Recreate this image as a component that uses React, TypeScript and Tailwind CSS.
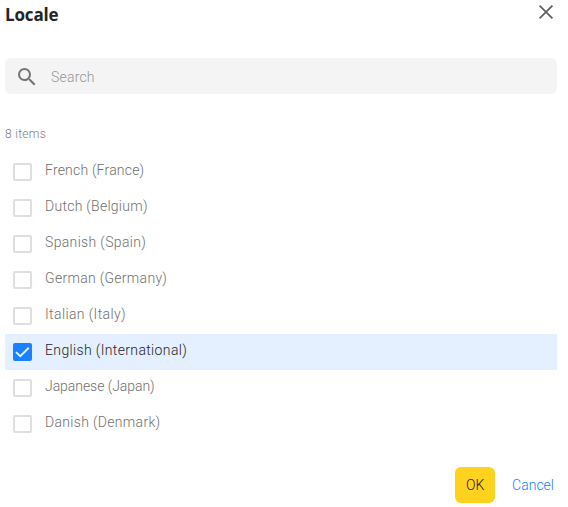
const locales = [
  { name: "French (France)", spacing: "tracking-[0.2px]" },
  { name: "Dutch (Belgium)", spacing: "tracking-[0.27px]" },
  { name: "Spanish (Spain)", spacing: "tracking-[0.34px]" },
  { name: "German (Germany)", spacing: "tracking-[0.3px]" },
  { name: "Italian (Italy)", spacing: "tracking-[0.38px]" },
  { name: "English (International)", spacing: "tracking-[0.36px]", checked: true },
  { name: "Japanese (Japan)", spacing: "tracking-[-0.05px]" },
  { name: "Danish (Denmark)", spacing: "tracking-[0.32px]" },
];

function Checkbox({ checked }: { checked?: boolean }) {
  if (!checked) {
    return <span className="mt-px h-[18px] w-[19px] shrink-0 rounded-[2px] border-2 border-[#dfdfdf] bg-white" />;
  }
  return (
    <span className="mt-px h-[18px] w-[19px] shrink-0 rounded-[2px] bg-[#1b80ff]">
      <svg viewBox="0 0 19 18" className="h-full w-full" fill="none" stroke="#e4f0ff" strokeWidth="2">
        <path d="M3 9.1 7.3 13.2 15.8 4.7" />
      </svg>
    </span>
  );
}

export default function App() {
  return (
    <div className="h-[507px] w-[568px] overflow-hidden bg-white pl-[5px] pr-[11px] font-['Roboto',sans-serif] text-sm font-light">
      <header className="flex h-[58px] items-start justify-between">
        <h1 className="pt-[3px] font-['Open_Sans',sans-serif] text-[17px] leading-6 font-bold tracking-[-0.15px] text-[#242424]">Locale</h1>
        <svg viewBox="0 0 14 14" className="mt-[5px] mr-[4px] h-[14px] w-[14px]" fill="none" stroke="#5f5f5f" strokeWidth="1.7">
          <path d="M.6.6 13.4 13.4M13.4.6.6 13.4" />
        </svg>
      </header>

      <div className="flex h-9 items-center rounded-md bg-[#f4f4f4] pl-[10px]">
        <svg viewBox="0 0 24 24" className="mt-px h-6 w-6" fill="#747474">
          <path d="M15.5 14h-.79l-.28-.27A6.47 6.47 0 0 0 16 9.5 6.5 6.5 0 1 0 9.5 16c1.61 0 3.09-.59 4.23-1.57l.27.28v.79l5 4.99L20.49 19zm-6 0C7.01 14 5 11.99 5 9.5S7.01 5 9.5 5 14 7.01 14 9.5 11.99 14 9.5 14" />
        </svg>
        <input aria-label="Search" placeholder="Search" className="ml-3 w-40 bg-transparent pt-[2px] tracking-[0.2px] outline-none placeholder:text-[#949494]" />
      </div>

      <p className="mt-8 h-7 text-xs leading-4 tracking-[0.3px] text-[#808080]">8 items</p>

      <ul>
        {locales.map((locale) => (
          <li key={locale.name} className={`flex h-9 items-start pt-2 pl-2 ${locale.checked ? "bg-[#e4f0ff] text-[#242424]" : "text-[#707070]"}`}>
            <Checkbox checked={locale.checked} />
            <span className={`-mt-px ml-[13px] leading-[18px] whitespace-nowrap ${locale.spacing}`}>{locale.name}</span>
          </li>
        ))}
      </ul>

      <footer className="mt-[25px] flex h-9 justify-end">
        <button className="h-9 w-10 rounded-md bg-[#ffd21d] text-[#242424]">OK</button>
        <button className="mr-[3px] ml-[17px] text-[#1b80ff]">Cancel</button>
      </footer>
    </div>
  );
}
